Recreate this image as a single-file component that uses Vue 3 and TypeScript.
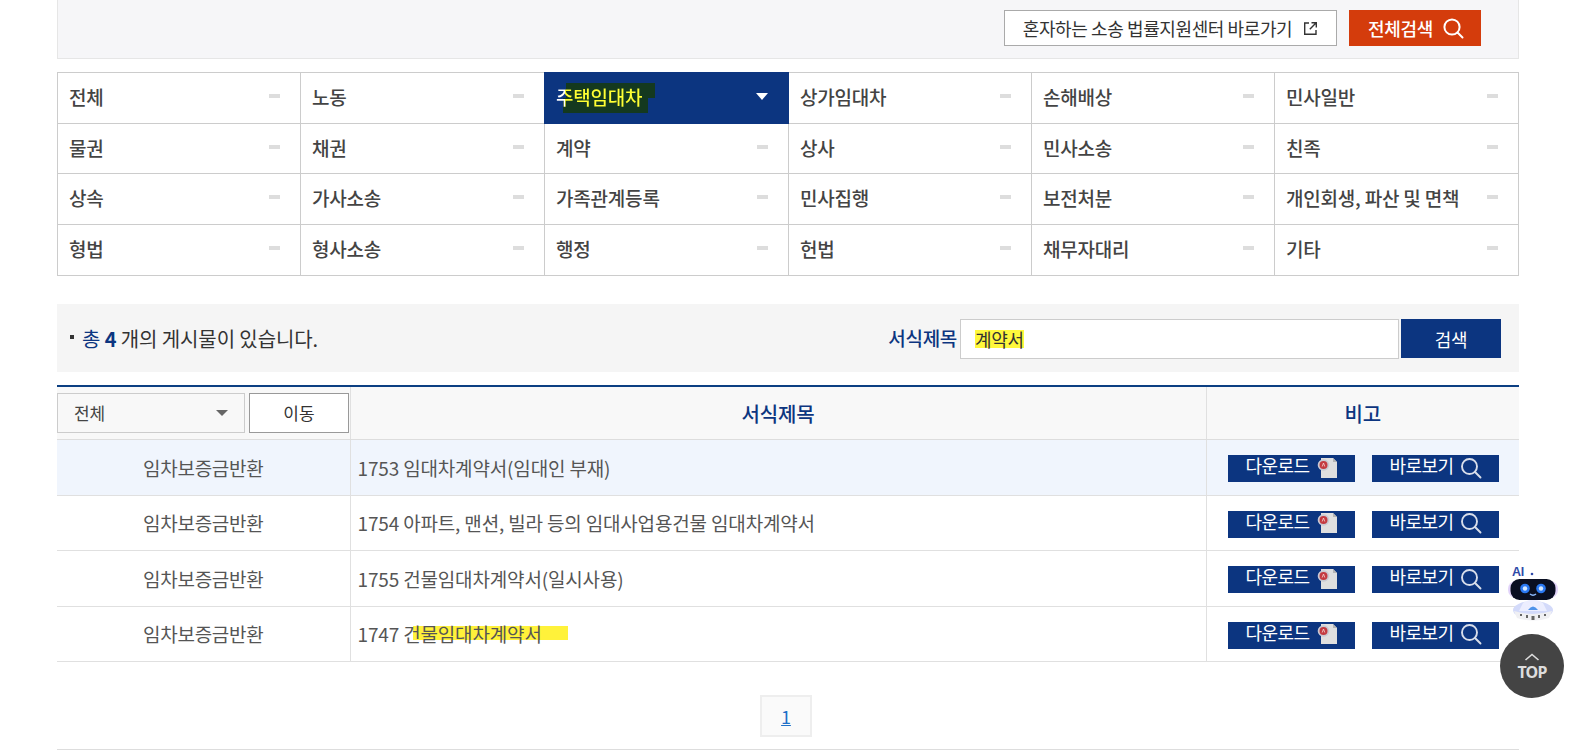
<script setup lang="ts">
const cats: string[] = ['전체','노동','주택임대차','상가임대차','손해배상','민사일반','물권','채권','계약','상사','민사소송','친족','상속','가사소송','가족관계등록','민사집행','보전처분','개인회생, 파산 및 면책','형법','형사소송','행정','헌법','채무자대리','기타']
const rows = [
  { no: '1753', pre: '임대차계약서(임대인 부재)', mark: '' },
  { no: '1754', pre: '아파트, 맨션, 빌라 등의 임대사업용건물 임대차계약서', mark: '' },
  { no: '1755', pre: '건물임대차계약서(일시사용)', mark: '' },
  { no: '1747', pre: '건물임대차계약서', mark: 'y' },
]
</script>

<template>
  <div class="page">
    <div class="topbar">
      <a class="ext">혼자하는 소송 법률지원센터 바로가기
        <svg width="15" height="15" viewBox="0 0 15 15" fill="none" stroke="#333" stroke-width="1.4"><path d="M6 2H1.7v11.3H13V9"/><path d="M8.5 1.7h4.8v4.8M13.2 1.8 6.8 8.2"/></svg>
      </a>
      <a class="allsearch">전체검색
        <svg width="22" height="22" viewBox="0 0 22 22" fill="none" stroke="#fff" stroke-width="2"><circle cx="10" cy="10" r="7.6"/><path d="m15.5 15.500 5 5" stroke-linecap="round"/></svg>
      </a>
    </div>

    <div class="cats">
      <div v-for="c in cats" :key="c" class="cat" :class="{ on: c === '주택임대차' }">
        <template v-if="c === '주택임대차'">
          <i class="hl hl1"></i><i class="hl hl2"></i>
          <span class="ontext">{{ c }}</span>
          <i class="tri"></i>
        </template>
        <template v-else>
          <span>{{ c }}</span>
          <i class="dash"></i>
        </template>
      </div>
    </div>

    <div class="search">
      <p class="total"><i class="dot"></i><span class="navy">총 <b>4</b></span> 개의 게시물이 있습니다.</p>
      <div class="form">
        <label>서식제목</label>
        <div class="input"><mark>계약서</mark></div>
        <button class="go">검색</button>
      </div>
    </div>

    <table class="list">
      <colgroup><col class="c1" /><col /><col class="c3" /></colgroup>
      <thead>
        <tr>
          <th class="filter">
            <div class="filterbox">
              <div class="select">전체<i class="seltri"></i></div>
              <button class="move">이동</button>
            </div>
          </th>
          <th>서식제목</th>
          <th>비고</th>
        </tr>
      </thead>
      <tbody>
        <tr v-for="(r, i) in rows" :key="r.no" :class="{ first: i === 0 }">
          <td class="kind">임차보증금반환</td>
          <td class="title">
            {{ r.no }}
            <span v-if="r.mark" class="ymark"><i class="ybar"></i><span class="ytext">{{ r.pre }}</span></span>
            <template v-else>{{ r.pre }}</template>
          </td>
          <td class="acts">
            <div class="actbox">
              <a class="act">다운로드
                <svg width="21" height="22" viewBox="0 0 21 22"><path d="M4 1h12l4 4v16H4z" fill="#dfdfdf"/><path d="M16 1l4 4h-4z" fill="#b5b5b5"/><circle cx="6.500" cy="8" r="5.800" fill="#c9c9d2"/><circle cx="6.500" cy="8" r="4" fill="#c43a40"/><path d="M5.200 9.500 6.500 6l1.300 3.500" stroke="#f4d6d6" stroke-width=".8" fill="none"/></svg>
              </a>
              <a class="act view">바로보기
                <svg width="22" height="22" viewBox="0 0 22 22" fill="none" stroke="#d9deea" stroke-width="1.900"><circle cx="9.500" cy="9.500" r="7.500"/><path d="m15 15 5.500 5.500" stroke-linecap="round"/></svg>
              </a>
            </div>
          </td>
        </tr>
      </tbody>
    </table>

    <div class="pager"><a>1</a></div>
    <div class="endline"></div>

    <div class="robot">
      <svg width="50" height="58" viewBox="0 0 50 58">
        <text x="4" y="11" font-family="'Liberation Sans',sans-serif" font-size="12.500" font-weight="700" fill="#2f4aa8">AI</text>
        <circle cx="24" cy="9" r="1.300" fill="#2f4aa8"/>
        <ellipse cx="25" cy="45" rx="20" ry="9" fill="#d3dafa"/>
        <path d="M15 38q10-7 20 0l4 8H11z" fill="#eceeff"/>
        <path d="M20 45q5-7 10 0z" fill="#4f93ea"/>
        <path d="M6 46q19 6 38 0l-3 7q-16 5-32 0z" fill="#f0f0f3"/>
        <g fill="#666"><rect x="12" y="49" width="2" height="2"/><rect x="18" y="50" width="2" height="3"/><rect x="23.500" y="51" width="3" height="4"/><rect x="30" y="50" width="2" height="3"/><rect x="36" y="49" width="2" height="2"/></g>
        <rect x="0" y="16" width="50" height="17" rx="8" fill="#e2d4fa"/>
        <rect x="2.500" y="14" width="45" height="21" rx="9" fill="#0a0f22"/>
        <circle cx="17" cy="23.500" r="4.800" fill="#2a78f2"/><circle cx="17" cy="23.500" r="2.200" fill="#d5e8ff"/>
        <circle cx="33" cy="23.500" r="4.800" fill="#2a78f2"/><circle cx="33" cy="23.500" r="2.200" fill="#d5e8ff"/>
        <path d="M22 29q3 2.500 6 0" stroke="#8fbcff" stroke-width="1.500" fill="none"/>
      </svg>
    </div>
    <a class="totop">
      <svg width="16" height="8" viewBox="0 0 16 8" fill="none" stroke="#ddd" stroke-width="1.600"><path d="m1.500 7 6.500-5.500L14.500 7"/></svg>
      <span>TOP</span>
    </a>
  </div>
</template>

<style>
html, body { margin: 0; overflow: hidden; background: #fff; }
</style>

<style scoped>
.page { position: relative; width: 1596px; height: 751px; padding: 0 77px 0 57px; box-sizing: border-box; overflow: hidden;
  font-family: "Noto Sans CJK KR", "Noto Sans", sans-serif; color: #444; font-size: 19px; letter-spacing: -0.2px; }
i { display: block; font-style: normal; }
.topbar { height: 59px; box-sizing: border-box; background: #f6f6f8; border: 1px solid #e6e6e6; border-top: 0; display: flex; justify-content: flex-end; align-items: flex-start; padding: 10px 37px 0 0; gap: 12px; }
.ext { width: 333px; height: 36px; box-sizing: border-box; border: 1px solid #aaa; background: #fff; display: flex; align-items: center; justify-content: center; gap: 11px; font-size: 18px; letter-spacing: -0.4px; color: #333; }
.allsearch { width: 132px; height: 36px; box-sizing: border-box; padding-left: 2px; background: #d43c0c; color: #fff; display: flex; align-items: center; justify-content: center; gap: 9px; font-size: 18px; letter-spacing: -0.3px; font-weight: 500; }
.cats { margin-top: 13px; display: grid; grid-template-columns: 243px 244px 244px 243px 243px 244px; grid-template-rows: 51px 50px 51px 51px; border-top: 1px solid #ccc; border-left: 1px solid #ccc; }
.cat { position: relative; display: flex; align-items: center; justify-content: space-between; padding: 0 20px 3px 11px; border-right: 1px solid #ccc; border-bottom: 1px solid #ccc; font-weight: 500; color: #444; white-space: nowrap; }
.dash { width: 11px; height: 4px; background: #ddd; margin-top: -1px; flex: none; }
.cat.on { background: #0c3580; margin: -1px 0 0 -1px; padding-left: 12px; padding-right: 20px; border-color: #0c3580; color: #fff; }
.ontext { position: relative; background: linear-gradient(90deg, #fff 9px, #ffff33 9px); -webkit-background-clip: text; background-clip: text; color: transparent; }
.hl { position: absolute; background: #14391f; }
.hl1 { left: 22px; top: 11px; width: 89px; height: 15px; }
.hl2 { left: 19px; top: 26px; width: 85px; height: 15px; }
.tri { width: 0; height: 0; border: 6px solid transparent; border-top: 7px solid #fff; border-bottom: 0; margin-top: 1px; }
.search { margin-top: 28px; height: 68px; background: #f5f5f5; display: flex; align-items: center; justify-content: space-between; padding: 0 18px 0 13px; }
.total { margin: 0; font-size: 20px; letter-spacing: -0.1px; color: #333; display: flex; align-items: center; white-space: pre; }
.dot { width: 4px; height: 4px; background: #333; margin-right: 8px; margin-top: -3px; }
.navy { color: #0c3580; }
.navy b { font-weight: 700; }
.form { display: flex; align-items: flex-start; gap: 3px; margin-top: 2px; }
.form label { font-weight: 500; color: #0c3580; letter-spacing: -0.3px; line-height: 38px; }
.input { width: 439px; height: 40px; box-sizing: border-box; border: 1px solid #ccc; background: #fff; display: flex; align-items: center; padding-left: 14px; font-size: 18px; letter-spacing: -0.3px; margin-right: -1px; color: #333; }
mark { background: #fff83c; color: #333; line-height: 18px; }
.go { width: 100px; height: 39px; border: 0; background: #0c3580; color: #fff; font: inherit; font-size: 18px; letter-spacing: -0.3px; padding: 0; }
.list { width: 1462px; margin-top: 13px; border-collapse: collapse; table-layout: fixed; border-top: 2px solid #0c3f82; }
.c1 { width: 293px; }
.c3 { width: 313px; }
th { height: 52px; background: #f8f8f8; font-size: 20px; font-weight: 500; color: #0c3580; border-bottom: 1px solid #ddd; border-left: 1px solid #e0e0e0; padding: 0; }
th.filter { border-left: 0; text-align: left; }
.filterbox { display: flex; gap: 4px; margin-top: -1px; }
.select { width: 188px; height: 40px; box-sizing: border-box; border: 1px solid #ccc; background: #f8f8f8; display: flex; align-items: center; justify-content: space-between; padding: 0 16px; font-size: 17px; font-weight: 400; color: #444; }
.seltri { width: 0; height: 0; border: 6px solid transparent; border-top: 6px solid #666; border-bottom: 0; }
.move { width: 100px; height: 40px; box-sizing: border-box; border: 1px solid #999; background: #fff; font: inherit; font-size: 17px; font-weight: 400; color: #333; padding: 0; }
td { height: 55.500px; box-sizing: border-box; padding: 0; border-bottom: 1px solid #e0e0e0; border-left: 1px solid #e0e0e0; font-size: 19px; letter-spacing: -0.3px; color: #555; }
tr.first td { background: #f0f5fd; }
td.kind { border-left: 0; text-align: center; }
td.title { padding-left: 7px; letter-spacing: -0.16px; }
.ymark { position: relative; }
.ybar { position: absolute; left: 10px; top: 6px; width: 155px; height: 14px; background: #fff23a; }
.ytext { position: relative; }
.actbox { display: flex; justify-content: flex-end; gap: 17px; padding-right: 20px; margin-top: 3px; }
.act { width: 127px; height: 27px; box-sizing: border-box; padding-bottom: 7px; background: #0c3580; color: #fff; font-size: 18px; letter-spacing: -0.5px; display: flex; align-items: center; justify-content: center; gap: 7px; }
.act svg { margin-bottom: -5px; }
.act.view { gap: 6px; }
.pager { margin-top: 33px; display: flex; justify-content: center; margin-right: 4px; }
.pager a { width: 52px; height: 42px; box-sizing: border-box; border: 2px solid #eee; background: #fafafa; display: flex; align-items: center; justify-content: center; color: #1f70c8; text-decoration: underline; font-size: 18px; }
.endline { margin-top: 12px; height: 1px; background: #ddd; }
.robot { position: absolute; left: 1508px; top: 565px; }
.totop { position: absolute; left: 1500px; top: 634px; width: 64px; height: 64px; border-radius: 50%; background: #444; color: #ddd; display: flex; flex-direction: column; align-items: center; justify-content: center; font-family: "Noto Sans", sans-serif; font-size: 16px; font-weight: 700; letter-spacing: -0.8px; line-height: 16px; gap: 3px; }
</style>
